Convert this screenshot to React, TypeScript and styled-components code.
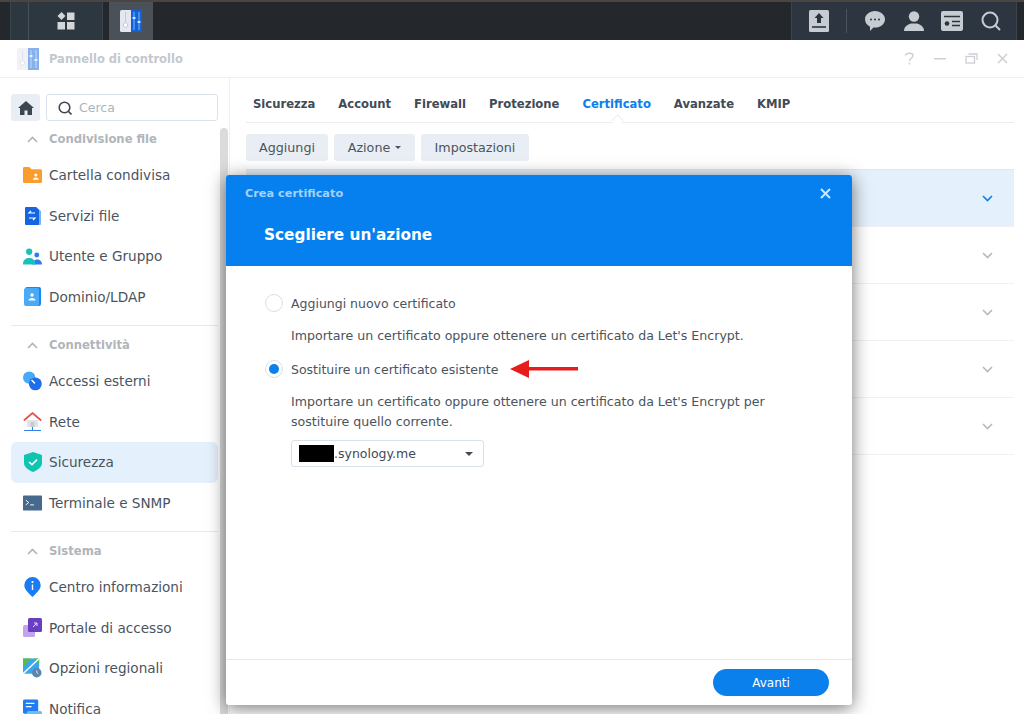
import React from 'react';
import styled, { createGlobalStyle } from 'styled-components';

const Global = createGlobalStyle`
    html, body { margin:0; padding:0; height:100%; overflow:hidden; background:#fff; }
    #root { height:100%; }
    * { box-sizing:border-box; }
`;

const Page = styled.div`
    position:relative;
    width:1024px;
    height:714px;
    overflow:hidden;
    font-family:"DejaVu Sans", "Noto Sans", sans-serif;
    font-size:13.6px;
    color:#4a545e;
`;

const Taskbar = styled.div`
    height:40px;
    display:flex;
    justify-content:space-between;
    background:#24282d;
    border-top:2px solid #4a4540;
`;

const TaskLeft = styled.div`
    display:flex;
    padding-left:10px;
    gap:6px;
`;

const MainMenu = styled.div`
    width:93px;
    display:flex;
    align-items:center;
    justify-content:center;
    background:#2d3740;
    border-left:1px solid #3a444e;
    border-right:1px solid #3a444e;
    position:relative;
    padding-left:18px;
    &:before {
        content:"";
        position:absolute;
        left:17px;
        top:0;
        bottom:0;
        width:1px;
        background:#46505a;
    }
`;

const OpenApp = styled.div`
    width:44px;
    display:flex;
    align-items:center;
    justify-content:center;
    background:#4b5159;
`;

const TaskRight = styled.div`
    width:226px;
    margin-right:7px;
    display:flex;
    align-items:center;
    background:#2d3640;
    border-left:1px solid #3a444e;
    border-right:1px solid #3a444e;
    padding-left:17px;
`;

const TrayIcon = styled.div<{ $w: number }>`
    width:${p => p.$w}px;
    display:flex;
    justify-content:center;
`;

const TraySep = styled.div`
    width:1px;
    height:24px;
    background:#4b555f;
    margin:0 8px 0 17px;
`;

const TitleBar = styled.div`
    height:38px;
    display:flex;
    align-items:center;
    padding:0 16px;
    border-bottom:1px solid #eef0f2;
`;

const TitleText = styled.div`
    margin-left:9px;
    font-size:11.5px;
    font-weight:700;
    color:#c3c8cd;
    flex:1;
`;

const WinButtons = styled.div`
    display:flex;
    align-items:center;
    gap:19px;
`;

const Body = styled.div`
    display:flex;
    height:636px;
`;

const Sidebar = styled.div`
    position:relative;
    width:230px;
    flex:none;
    padding:16px 11px 0 11px;
    border-right:1px solid #eef0f2;
    overflow:hidden;
`;

const Scroll = styled.div`
    position:absolute;
    left:220px;
    top:50px;
    width:8px;
    height:600px;
    background:#d9dbdd;
    border-radius:4px;
`;

const SearchRow = styled.div`
    display:flex;
    gap:6px;
    height:27px;
    margin-bottom:4px;
`;

const HomeBtn = styled.div`
    width:29px;
    display:flex;
    align-items:center;
    justify-content:center;
    background:#e9eef4;
    border-radius:3px;
`;

const SearchBox = styled.div`
    flex:1;
    display:flex;
    align-items:center;
    gap:7px;
    padding-left:11px;
    border:1px solid #dbe3ec;
    border-radius:3px;
    color:#a9b4bf;
    font-size:12.5px;
`;

const SectionHead = styled.div`
    height:28px;
    margin-bottom:2px;
    display:flex;
    align-items:center;
    gap:11px;
    padding-left:16px;
    font-size:11.6px;
    font-weight:700;
    color:#b0b5ba;
`;

const Item = styled.div<{ $active?: boolean }>`
    height:40.5px;
    display:flex;
    align-items:center;
    gap:7px;
    padding-left:12px;
    border-radius:6px;
    background:${p => (p.$active ? '#e4f0fb' : 'transparent')};
    white-space:nowrap;
`;

const ItemIcon = styled.div`
    width:19px;
    height:19px;
    flex:none;
    display:flex;
    align-items:center;
    justify-content:center;
`;

const Rule = styled.div`
    height:1px;
    background:#e8eaec;
    margin:8px 0 5px;
`;

const Main = styled.div`
    flex:1;
    padding:0 10px 0 16px;
`;

const Tabs = styled.div`
    height:45px;
    display:flex;
    align-items:center;
    gap:23px;
    padding:8px 0 0 7px;
    border-bottom:1px solid #e9edf2;
`;

const Tab = styled.div<{ $active?: boolean }>`
    position:relative;
    font-size:11.6px;
    font-weight:700;
    color:${p => (p.$active ? '#0a80ec' : '#414b55')};
    &:after {
        content:"";
        display:${p => (p.$active ? 'block' : 'none')};
        position:absolute;
        left:50%;
        bottom:-14px;
        width:8px;
        height:8px;
        margin-left:-4px;
        background:#fff;
        border-left:1px solid #e9edf2;
        border-top:1px solid #e9edf2;
        transform:rotate(45deg);
    }
`;

const Toolbar = styled.div`
    display:flex;
    gap:6px;
    margin-top:11px;
    margin-bottom:8px;
`;

const ToolButton = styled.div<{ $w: number }>`
    width:${p => p.$w}px;
    height:27px;
    display:flex;
    align-items:center;
    justify-content:center;
    gap:5px;
    background:#e9eef4;
    border-radius:3px;
    font-size:12.7px;
`;

const Caret = styled.span<{ $size?: number }>`
    width:0;
    height:0;
    border-left:${p => p.$size ?? 3.5}px solid transparent;
    border-right:${p => p.$size ?? 3.5}px solid transparent;
    border-top:${p => p.$size ?? 3.5}px solid currentColor;
`;

const CertList = styled.div`
    border-top:1px solid #dce8f5;
`;

const CertRow = styled.div<{ $active?: boolean }>`
    height:57px;
    display:flex;
    align-items:center;
    justify-content:flex-end;
    padding:0 21px 0 0;
    background:${p => (p.$active ? '#e4f0fb' : '#fff')};
    border-bottom:1px solid #eef0f2;
    color:${p => (p.$active ? '#0a80ec' : '#b4bac0')};
`;

const Dialog = styled.div`
    position:absolute;
    left:226px;
    top:175px;
    width:626px;
    height:530px;
    display:flex;
    flex-direction:column;
    background:#fff;
    border-radius:3px;
    box-shadow:0 3px 18px rgba(0,0,0,.55);
`;

const DialogHead = styled.div`
    height:91px;
    flex:none;
    padding:10px 21px 0 19px;
    background:#0580ee;
    border-radius:3px 3px 0 0;
`;

const HeadTop = styled.div`
    display:flex;
    align-items:center;
    justify-content:space-between;
    height:17px;
    font-size:11.3px;
    font-weight:700;
    color:#a3d2fa;
`;

const HeadTitle = styled.div`
    margin:24px 0 0 19px;
    font-size:15.3px;
    font-weight:700;
    color:#fff;
`;

const DialogBody = styled.div`
    flex:1;
    padding:28px 39px 0 39px;
`;

const RadioRow = styled.div<{ $gap?: number }>`
    height:18px;
    margin-top:${p => p.$gap ?? 0}px;
    display:flex;
    align-items:center;
    gap:8px;
    font-size:12.5px;
`;

const Radio = styled.div<{ $on?: boolean }>`
    width:18px;
    height:18px;
    flex:none;
    display:flex;
    align-items:center;
    justify-content:center;
    border:1px solid #d8e0e8;
    border-radius:50%;
    &:after {
        content:"";
        width:10px;
        height:10px;
        border-radius:50%;
        background:${p => (p.$on ? '#0a80ec' : 'transparent')};
    }
`;

const Hint = styled.div<{ $gap: number }>`
    margin:${p => p.$gap}px 0 0 26px;
    font-size:12.6px;
    line-height:20px;
`;

const ArrowWrap = styled.div`
    margin-left:4px;
    display:flex;
`;

const SelectBox = styled.div`
    width:193px;
    height:27px;
    margin:8px 0 0 26px;
    display:flex;
    align-items:center;
    padding:0 10px 0 7px;
    border:1px solid #d8e0e8;
    border-radius:3px;
    font-size:12.5px;
    color:#414b55;
`;

const Redacted = styled.span`
    width:35px;
    height:17px;
    background:#000;
    flex:none;
`;

const SelectText = styled.span`
    flex:1;
`;

const DialogFoot = styled.div`
    height:46px;
    flex:none;
    display:flex;
    align-items:center;
    justify-content:flex-end;
    padding:0 23px 0 0;
    border-top:1px solid #e6e8ea;
`;

const Primary = styled.div`
    width:116px;
    height:27px;
    display:flex;
    align-items:center;
    justify-content:center;
    background:#0a80ec;
    border-radius:14px;
    color:#fff;
    font-size:12px;
`;

const PanelIcon = ({ size, faded }: { size: number; faded?: boolean }) => (
    <svg width={size} height={size} viewBox="0 0 24 24" opacity={faded ? 0.5 : 1}>
        <rect x="1" y="1" width="12" height="22" rx="1.5" fill="#e4e6f0" />
        <rect x="12" y="1" width="11" height="22" fill="#1261d8" />
        <circle cx="6.5" cy="16" r="2.2" fill="#fff" stroke="#b9bed0" strokeWidth=".8" />
        <path d="M6.5 3v10" stroke="#c4c8d6" />
        <path d="M15 3v18M20 3v18" stroke="#7fc0f5" />
        <path d="M13.5 9h3M18.5 13h3" stroke="#fff" strokeWidth="1.6" />
    </svg>
);

const Chevron = ({ up, color }: { up?: boolean; color?: string }) => (
    <svg width="11" height="7" viewBox="0 0 11 7" fill="none" stroke={color ?? 'currentColor'} strokeWidth="1.6">
        <path d={up ? 'M1 6l4.5-4.5L10 6' : 'M1 1l4.5 4.5L10 1'} />
    </svg>
);

const FolderIcon = () => (
    <svg width="20" height="18" viewBox="0 0 20 18">
        <path d="M0 2a1.5 1.5 0 0 1 1.5-1.5h5L9 3h9.5A1.5 1.5 0 0 1 20 4.5V16a1.5 1.5 0 0 1-1.5 1.5h-17A1.5 1.5 0 0 1 0 16z" fill="#fb9d2d" />
        <circle cx="13.5" cy="9" r="1.6" fill="#fff" />
        <path d="M10.5 14c0-3 6-3 6 0z" fill="#fff" />
    </svg>
);

const FileIcon = () => (
    <svg width="18" height="20" viewBox="0 0 18 20">
        <path d="M3 1h9l5 4v13a1 1 0 0 1-1 1H3z" fill="#7ab2f5" />
        <path d="M1 2a1 1 0 0 1 1-1h10l3 3v14a1 1 0 0 1-1 1H2a1 1 0 0 1-1-1z" fill="#1565e0" />
        <path d="M11 7H5l2-2M5 12h6l-2 2" stroke="#fff" strokeWidth="1.2" fill="none" />
    </svg>
);

const UsersIcon = () => (
    <svg width="20" height="17" viewBox="0 0 20 17">
        <circle cx="14.5" cy="7" r="2.6" fill="#2e7df0" />
        <path d="M10 17c0-7 10-7 10 0z" fill="#2e7df0" />
        <circle cx="6.5" cy="3.5" r="3.3" fill="#18c2b8" />
        <path d="M0 16c0-8 13-8 13 0v1H0z" fill="#18c2b8" />
    </svg>
);

const DomainIcon = () => (
    <svg width="17" height="19" viewBox="0 0 17 19">
        <rect x="1" y="0" width="16" height="19" rx="2" fill="#1b88f0" />
        <rect x="0" y="1" width="15" height="18" rx="2" fill="#49aaf8" />
        <circle cx="8" cy="8" r="1.7" fill="#fff" />
        <path d="M4.5 13.5c0-3.4 7-3.4 7 0z" fill="#fff" />
    </svg>
);

const LinkIcon = () => (
    <svg width="20" height="20" viewBox="0 0 20 20">
        <circle cx="6.5" cy="6.5" r="6.5" fill="#47aaf8" />
        <circle cx="13" cy="13" r="6.8" fill="#1c6fe8" />
        <path d="M9 9l3.5 3.5" stroke="#fff" strokeWidth="1.5" />
    </svg>
);

const HouseIcon = () => (
    <svg width="19" height="20" viewBox="0 0 19 20">
        <path d="M4 8h11v7H4z" fill="#e0e4e8" />
        <path d="M.8 8.5L9.5 1l8.7 7.5" fill="none" stroke="#e4534a" strokeWidth="1.7" />
        <rect x="7.5" y="10" width="4" height="5" fill="#c4ccd4" />
        <path d="M9.5 15v3M1 18.5h17" stroke="#2f80ed" strokeWidth="1" />
    </svg>
);

const ShieldIcon = () => (
    <svg width="18" height="20" viewBox="0 0 18 20">
        <path d="M9 0l9 3v8c0 4-4 7-9 9-5-2-9-5-9-9V3z" fill="#10c4b2" />
        <path d="M5 10l3 2.6L13 7.6" stroke="#fff" strokeWidth="1.6" fill="none" />
    </svg>
);

const TermIcon = () => (
    <svg width="20" height="16" viewBox="0 0 20 16">
        <rect width="20" height="16" rx="1" fill="#47698e" />
        <path d="M3 5l3 2.5L3 10" stroke="#fff" strokeWidth="1" fill="none" />
        <path d="M7.5 10h4" stroke="#fff" strokeWidth="1" />
    </svg>
);

const InfoIcon = () => (
    <svg width="17" height="20" viewBox="0 0 17 20">
        <path d="M8.5 0a8.2 8.2 0 0 1 8.2 8.2c0 4-4 7.6-8.2 11.8C4.3 15.8.3 12.2.3 8.2A8.2 8.2 0 0 1 8.5 0z" fill="#1a7cf0" />
        <circle cx="8.5" cy="5" r="1.1" fill="#fff" />
        <path d="M8.5 7.5V13" stroke="#fff" strokeWidth="1.4" />
    </svg>
);

const PortalIcon = () => (
    <svg width="19" height="19" viewBox="0 0 19 19">
        <rect x="0" y="7" width="12" height="12" rx="1.5" fill="#c3a4ec" />
        <rect x="5" y="0" width="14" height="14" rx="1.5" fill="#6a3ec0" />
        <path d="M10 9l4-4M11 5h3v3" stroke="#e8dcff" strokeWidth="1" fill="none" />
    </svg>
);

const RegionIcon = () => (
    <svg width="20" height="20" viewBox="0 0 20 20">
        <rect y="0" width="17" height="16" fill="#3aa7ec" />
        <path d="M0 0h9L0 9z" fill="#5cb947" />
        <path d="M11 0h6v6z" fill="#5cb947" />
        <path d="M0 16L17 0" stroke="#fff" strokeWidth="1.5" />
        <circle cx="14.5" cy="15" r="5" fill="#5a85ad" />
        <path d="M14.5 12.5V15l1.5 1" stroke="#fff" strokeWidth=".8" fill="none" />
    </svg>
);

const NoticeIcon = () => (
    <svg width="20" height="20" viewBox="0 0 20 20">
        <rect y="0" width="16" height="15" rx="1.5" fill="#1f7cf2" />
        <path d="M3 4h9M3 7.5h6" stroke="#fff" strokeWidth="1.3" />
        <rect x="4" y="12" width="16" height="8" rx="2" fill="#69bdf9" />
    </svg>
);

const sections = [
    {
        title: 'Condivisione file',
        items: [
            { label: 'Cartella condivisa', icon: <FolderIcon /> },
            { label: 'Servizi file', icon: <FileIcon /> },
            { label: 'Utente e Gruppo', icon: <UsersIcon /> },
            { label: 'Dominio/LDAP', icon: <DomainIcon /> },
        ],
    },
    {
        title: 'Connettività',
        items: [
            { label: 'Accessi esterni', icon: <LinkIcon /> },
            { label: 'Rete', icon: <HouseIcon /> },
            { label: 'Sicurezza', icon: <ShieldIcon />, active: true },
            { label: 'Terminale e SNMP', icon: <TermIcon /> },
        ],
    },
    {
        title: 'Sistema',
        items: [
            { label: 'Centro informazioni', icon: <InfoIcon /> },
            { label: 'Portale di accesso', icon: <PortalIcon /> },
            { label: 'Opzioni regionali', icon: <RegionIcon /> },
            { label: 'Notifica', icon: <NoticeIcon /> },
        ],
    },
];

const tabs = ['Sicurezza', 'Account', 'Firewall', 'Protezione', 'Certificato', 'Avanzate', 'KMIP'];

const App = () => {
    return (
        <Page>
            <Global />
            <Taskbar>
                <TaskLeft>
                    <MainMenu>
                        <svg width="18" height="18" viewBox="0 0 18 18" fill="#d4d6d8">
                            <path d="M4.5 0l4 4-4 4-4-4z" />
                            <rect x="10" y="0.5" width="7.5" height="7.5" />
                            <rect x="0.5" y="10" width="7.5" height="7.5" />
                            <rect x="10" y="10" width="7.5" height="7.5" />
                        </svg>
                    </MainMenu>
                    <OpenApp><PanelIcon size={24} /></OpenApp>
                </TaskLeft>
                <TaskRight>
                    <TrayIcon $w={20}>
                        <svg width="20" height="22" viewBox="0 0 20 22">
                            <rect width="20" height="22" rx="1.5" fill="#c6ccd2" />
                            <path d="M10 3l4.5 5H12v5H8V8H5.500z" fill="#2b333b" />
                            <path d="M3 17h14" stroke="#2b333b" strokeWidth="1.6" />
                        </svg>
                    </TrayIcon>
                    <TraySep />
                    <TrayIcon $w={40}>
                        <svg width="20" height="20" viewBox="0 0 20 20">
                            <path d="M10 0c5.500 0 10 3.700 10 8.300s-4.500 8.300-10 8.300c-.6 0-1 0-1.600-.1L5 20v-4.300C2 14.300 0 11.500 0 8.300 0 3.700 4.500 0 10 0z" fill="#c6ccd2" />
                            <circle cx="6" cy="8.5" r="1" fill="#2b333b" />
                            <circle cx="10" cy="8.5" r="1" fill="#2b333b" />
                            <circle cx="14" cy="8.5" r="1" fill="#2b333b" />
                        </svg>
                    </TrayIcon>
                    <TrayIcon $w={38}>
                        <svg width="20" height="20" viewBox="0 0 20 20" fill="#c6ccd2">
                            <circle cx="10" cy="5.5" r="5.2" />
                            <path d="M0 20c0-4.500 3.500-6.500 7-7.500h6c3.500 1 7 3 7 7.500z" />
                        </svg>
                    </TrayIcon>
                    <TrayIcon $w={38}>
                        <svg width="22" height="20" viewBox="0 0 22 20">
                            <rect width="22" height="20" rx="2" fill="#c6ccd2" />
                            <path d="M3 5.5h16" stroke="#2b333b" strokeWidth="1.5" />
                            <circle cx="6" cy="12.5" r="2.3" fill="#2b333b" />
                            <path d="M11 10.5h8M11 14.500h8" stroke="#2b333b" strokeWidth="1.5" />
                        </svg>
                    </TrayIcon>
                    <TrayIcon $w={39}>
                        <svg width="20" height="20" viewBox="0 0 20 20" fill="none" stroke="#c6ccd2" strokeWidth="2">
                            <circle cx="9" cy="9" r="7.5" />
                            <path d="M14.5 14.5L19 19" />
                        </svg>
                    </TrayIcon>
                </TaskRight>
            </Taskbar>
            <TitleBar>
                <PanelIcon size={24} faded />
                <TitleText>Pannello di controllo</TitleText>
                <WinButtons>
                    <svg width="11" height="13" viewBox="0 0 11 13" fill="none" stroke="#ccd0d4" strokeWidth="1.5">
                        <path d="M1.500 3.500C2 .5 9 .5 9 3.500c0 2.500-3.500 2.500-3.500 5.500" />
                        <path d="M5.500 10.500v2" />
                    </svg>
                    <svg width="12" height="2" viewBox="0 0 12 2"><rect width="12" height="1.5" fill="#ccd0d4" /></svg>
                    <svg width="13" height="11" viewBox="0 0 13 11" fill="none" stroke="#ccd0d4" strokeWidth="1.3">
                        <rect x="1" y="3.5" width="8.5" height="6.5" />
                        <path d="M3.500 1H12v6" />
                    </svg>
                    <svg width="11" height="11" viewBox="0 0 11 11" stroke="#ccd0d4" strokeWidth="1.5">
                        <path d="M1 1l9 9M10 1l-9 9" />
                    </svg>
                </WinButtons>
            </TitleBar>
            <Body>
                <Sidebar>
                    <Scroll />
                    <SearchRow>
                        <HomeBtn>
                            <svg width="16" height="14" viewBox="0 0 16 14" fill="#3d4650">
                                <path d="M8 0l8 7h-2v7H9.500V9.500h-3V14H2V7H0z" />
                            </svg>
                        </HomeBtn>
                        <SearchBox>
                            <svg width="14" height="14" viewBox="0 0 14 14" fill="none" stroke="#3d4650" strokeWidth="1.6">
                                <circle cx="6.5" cy="6.5" r="5.3" />
                                <path d="M10.500 10.500L13.500 13.500" />
                            </svg>
                            Cerca
                        </SearchBox>
                    </SearchRow>
                    {sections.map((s, i) => (
                        <div key={s.title}>
                            {i > 0 && <Rule />}
                            <SectionHead>
                                <Chevron up color="#b0b5ba" />
                                {s.title}
                            </SectionHead>
                            {s.items.map(it => (
                                <Item key={it.label} $active={it.active}>
                                    <ItemIcon>{it.icon}</ItemIcon>
                                    {it.label}
                                </Item>
                            ))}
                        </div>
                    ))}
                </Sidebar>
                <Main>
                    <Tabs>
                        {tabs.map(t => (
                            <Tab key={t} $active={t === 'Certificato'}>{t}</Tab>
                        ))}
                    </Tabs>
                    <Toolbar>
                        <ToolButton $w={82}>Aggiungi</ToolButton>
                        <ToolButton $w={81}>Azione <Caret /></ToolButton>
                        <ToolButton $w={108}>Impostazioni</ToolButton>
                    </Toolbar>
                    <CertList>
                        {[0, 1, 2, 3, 4].map(i => (
                            <CertRow key={i} $active={i === 0}>
                                <Chevron />
                            </CertRow>
                        ))}
                    </CertList>
                </Main>
            </Body>
            <Dialog>
                <DialogHead>
                    <HeadTop>
                        Crea certificato
                        <svg width="11" height="11" viewBox="0 0 11 11" stroke="#cfe6fb" strokeWidth="2">
                            <path d="M1 1l9 9M10 1l-9 9" />
                        </svg>
                    </HeadTop>
                    <HeadTitle>Scegliere un'azione</HeadTitle>
                </DialogHead>
                <DialogBody>
                    <RadioRow><Radio />Aggiungi nuovo certificato</RadioRow>
                    <Hint $gap={14}>Importare un certificato oppure ottenere un certificato da Let's Encrypt.</Hint>
                    <RadioRow $gap={14}>
                        <Radio $on />
                        Sostituire un certificato esistente
                        <ArrowWrap>
                            <svg width="68" height="20" viewBox="0 0 68 20" fill="#e71c1c">
                                <path d="M0 10L19 1v7h49v3.500H19V19z" />
                            </svg>
                        </ArrowWrap>
                    </RadioRow>
                    <Hint $gap={14}>
                        Importare un certificato oppure ottenere un certificato da Let's Encrypt per
                        <br />
                        sostituire quello corrente.
                    </Hint>
                    <SelectBox>
                        <Redacted />
                        <SelectText>.synology.me</SelectText>
                        <Caret $size={4} />
                    </SelectBox>
                </DialogBody>
                <DialogFoot>
                    <Primary>Avanti</Primary>
                </DialogFoot>
            </Dialog>
        </Page>
    );
};

export default App;
